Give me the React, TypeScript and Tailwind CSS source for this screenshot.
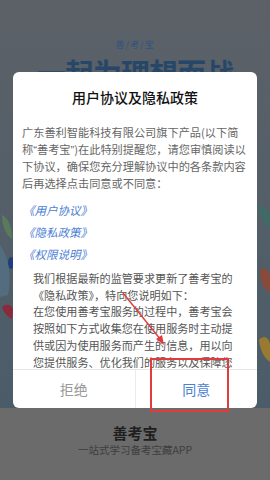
import React from "react";

const Q = ({ c }: { c: string }) => (
  <span style={{ fontFamily: '"Liberation Sans", sans-serif' }}>{c}</span>
);

const policyLines = [
  "我们根据最新的监管要求更新了善考宝的",
  "《隐私政策》，特向您说明如下：",
  "在您使用善考宝服务的过程中，善考宝会",
  "按照如下方式收集您在使用服务时主动提",
  "供或因为使用服务而产生的信息，用以向",
  "您提供服务、优化我们的服务以及保障您",
  "的账号安全，我们将依法保护您的信息。",
];

const links = ["《用户协议》", "《隐私政策》", "《权限说明》"];

const font = { fontFamily: '"Noto Sans CJK SC", "Noto Sans", sans-serif' };

function SideArt() {
  return (
    <>
      <svg className="absolute left-0 top-[205px]" width="14" height="130" viewBox="0 0 14 130">
        <path d="M2 10 C8 12 12 22 12 34 C6 30 2 22 2 10Z" fill="#5b7a5c" />
        <ellipse cx="11" cy="58" rx="3" ry="6" fill="#1e3f7a" />
        <path d="M0 40 C8 50 12 70 8 90 L0 92Z" fill="#557487" opacity="0.7" />
        <path d="M2 102 C6 98 12 100 13 104 L12 114 C8 112 4 108 2 102Z" fill="#8a2a3a" />
      </svg>
      <svg className="absolute right-0 top-[200px]" width="14" height="170" viewBox="0 0 14 170">
        <path d="M2 6 C8 4 12 10 14 18 L14 30 C8 24 4 16 2 6Z" fill="#3f6a66" />
        <path d="M4 70 C9 66 14 70 14 78 L14 92 C8 90 4 82 4 70Z" fill="#8a4a3a" />
        <path d="M3 140 C8 134 14 138 14 146 L14 162 C8 158 4 150 3 140Z" fill="#9a7a30" />
      </svg>
    </>
  );
}

export default function App() {
  return (
    <div className="relative w-[270px] h-[480px] overflow-hidden" style={font}>
      <div className="relative h-[408px] bg-gradient-to-b from-[#5c6167] to-[#4b5c69] flex flex-col items-center pt-[40px]">
        <div className="text-[9px] leading-[10px] tracking-[1px] text-[#2f5380]">善/考/宝</div>
        <div className="mt-[6px] text-[29px] leading-[32px] font-bold tracking-[-1px] text-[#274769]">
          一起为理想而战
        </div>
        <SideArt />
      </div>
      <div className="h-[72px] bg-[#6b6b6b] flex flex-col items-center pt-[15px]">
        <div className="text-[15px] leading-[20px] font-bold text-[#1f1f1f]">善考宝</div>
        <div className="text-[10.5px] leading-[14px] text-[#3e3e3e]">一站式学习备考宝藏APP</div>
      </div>

      <div className="absolute left-[13px] top-[72px] w-[244px] h-[336px] bg-white rounded-md flex flex-col overflow-hidden">
        <div className="pt-[17px] pb-[18px] text-center text-[14px] leading-[17px] font-medium text-[#111]">
          用户协议及隐私政策
        </div>
        <div className="flex-1 overflow-hidden">
          <div className="px-[9px] text-[11.2px] leading-[16.7px] text-[#666] whitespace-nowrap">
            <div>广东善利智能科技有限公司旗下产品(以下简</div>
            <div>
              称<Q c="“" />善考宝<Q c="”" />)在此特别提醒您，请您审慎阅读以
            </div>
            <div>下协议，确保您充分理解协议中的各条款内容</div>
            <div>后再选择点击同意或不同意：</div>
          </div>
          <div className="mt-[10px] pl-[10px] flex flex-col gap-[6px] text-[11.5px] leading-[16px] italic text-[#4c7fd4]">
            {links.map((l) => (
              <div key={l}>{l}</div>
            ))}
          </div>
          <div className="mt-[8px] pl-[20px] text-[11.1px] leading-[16.8px] text-[#555] whitespace-nowrap">
            {policyLines.map((l) => (
              <div key={l}>{l}</div>
            ))}
          </div>
        </div>
        <div className="h-[39px] shrink-0 border-t border-[#e6e6e6] flex text-[14px]">
          <div className="flex-1 flex items-center justify-center text-[#9a9a9a] border-r border-[#ececec]">
            拒绝
          </div>
          <div className="flex-1 flex items-center justify-center text-[#4c7fd4]">同意</div>
        </div>
      </div>

      <div className="absolute left-[150px] top-[358px] w-[79px] h-[54px] border-2 border-[#e23b3b]" />
      <svg className="absolute left-0 top-0" width="270" height="480" viewBox="0 0 270 480">
        <line x1="123" y1="293" x2="161" y2="340" stroke="#e23b3b" strokeWidth="1.4" />
        <path d="M164 345 L156 339 L162 335Z" fill="#e23b3b" />
      </svg>
    </div>
  );
}
